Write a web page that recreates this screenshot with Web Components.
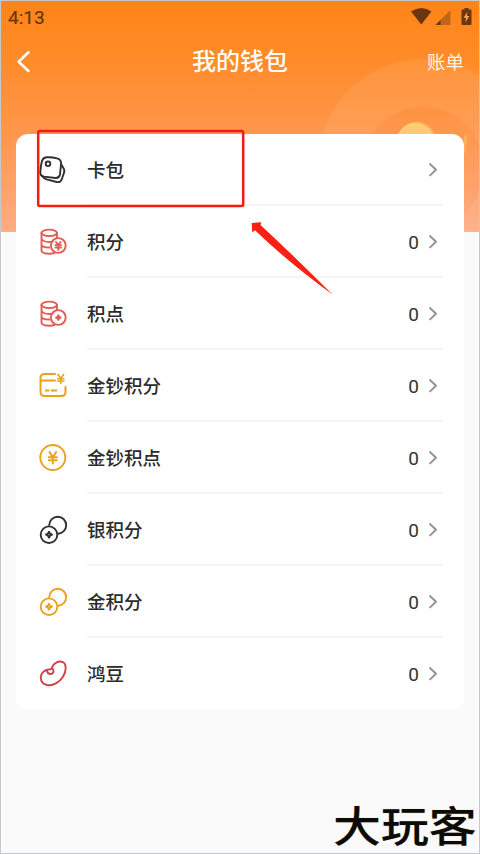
<!DOCTYPE html>
<html lang="zh-CN">
<head>
<meta charset="utf-8">
<title>我的钱包</title>
<style>
html,body{margin:0;padding:0}
body{width:480px;height:854px;overflow:hidden;font-family:Roboto,"Noto Sans CJK SC",sans-serif;color:#262626}
</style>
</head>
<body>
<wallet-app></wallet-app>
<script>
const define = (name, html) => {
  const t = document.createElement('template');
  t.innerHTML = html;
  customElements.define(name, class extends HTMLElement {
    constructor() {
      super();
      this.attachShadow({mode: 'open'}).append(t.content.cloneNode(true));
    }
  });
};

const stack = '<path d="M2 5v17.500c0 2 3.500 3.200 8 3.200q3 0 5-.8M17.500 5v5M2 10.500c0 2 3.500 3.500 8 3.500q2 0 3-.4M2 16.500c0 1.800 3.500 3 8 3"/><ellipse cx="9.750" cy="4.800" rx="7.750" ry="3.200"/><circle cx="18.800" cy="17.500" r="7.400"/>';
const coins = '<path d="M9.700 9A8.500 8.500 0 1 1 18.300 17.700"/><circle cx="9.500" cy="18.700" r="8.300"/><path stroke-width="2" d="M9.500 15.800l1 1.900 1.900 1-1.900 1-1 1.900-1-1.900-1.900-1 1.900-1z"/>';
const icons = {
  card: ['#303030', '<path d="M7 1.300Q12 .8 17.500 2.400Q21.800 3.500 21.600 7.500L20.500 18.500Q19.700 22.300 16 22L4.500 20.600Q.6 20 .8 16.200Q1 10 2.500 5Q3.500 1.700 7 1.300Z"/><path d="M21.800 8.500l2.500 4.200q.9 1.800.2 4l-2.200 6.500q-1.300 3.600-5 2.800l-10.200-2.700q-3-1-4.200-3"/><circle cx="8.500" cy="7.800" r="2.300"/>'],
  yen: ['#e45c56', stack + '<path d="M16.500 14l2.300 3 2.300-3M16 17.300h5.600M16 19.600h5.600M18.800 17v4.800"/>'],
  point: ['#e45c56', stack + '<path d="M18.800 15.300l.8 1.500 1.500.8-1.500.8-.8 1.500-.8-1.500-1.500-.8 1.500-.8z"/>'],
  bill: ['#eba11b', '<path stroke-width="2" d="M15.500 2H5Q1 2 1 6v13.500Q1 24 5 24h17Q26 24 26 20V15M1.500 8.500h14"/><path stroke-width="2" stroke-linecap="butt" d="M5.500 18.500h4.500M11.500 18.500h6"/><path stroke-width="1.600" d="M18.500 2.500l2.800 4 2.800-4M18.200 6.800h6.200M18.200 9h6.200M21.300 6.500v5"/>'],
  gold: ['#eba11b', '<circle cx="13.300" cy="13.500" r="12.500"/><path stroke-width="2" d="M10 8l3.300 5.300L16.600 8M9.300 13.300h8M9.300 16.300h8M13.300 13.300v6.300"/>'],
  silver: ['#303030', coins],
  goldcoins: ['#eba11b', coins],
  bean: ['#cf4348', '<path d="M12.500 7.500C14.500 2.500 19.500 .7 23.200 2C27.400 4 26.800 11.500 23.500 16.700C20 22.500 13.500 26 7.500 25C1.500 23.800 0 18 2 14.200C4 10.500 8 9.300 11 9.200C12 9 12.200 8.500 12.500 7.500Z"/><path d="M7.500 10.200q.2 3.600 3.100 3.800q3 0 3.400-2.700q.1-2-1.700-3.200"/>']
};
customElements.define('wallet-icon', class extends HTMLElement {
  constructor() {
    super();
    const [color, art] = icons[this.getAttribute('name')];
    this.attachShadow({mode: 'open'}).innerHTML = `<style>:host{display:block;width:28px;height:28px}svg{display:block;overflow:visible}</style>
      <svg width="28" height="28" viewBox="-0.500 0 28 28" fill="none" stroke="${color}" stroke-width="1.900" stroke-linecap="round" stroke-linejoin="round">${art}</svg>`;
  }
});

define('status-bar', `<style>
:host{display:flex;height:31px;padding:0 7px 0 7px;align-items:center;justify-content:space-between;color:#693611;font:400 19px/31px Roboto,sans-serif}
span{-webkit-text-stroke:.2px currentColor;padding-top:1px}
svg{display:block}</style>
<span>4:13</span>
<svg width="62" height="20" viewBox="0 0 62 20">
<path fill="#693611" d="M1 4.500Q11.500-2.500 21.500 4.500L11.300 17.500Z"/>
<path fill="#bf6519" d="M25.500 18L40.500 3v15z"/><path fill="#693611" d="M25.500 18l5-5v5z"/>
<path fill="#693611" d="M51.500 3.500q0-1 1-1h2V1h4v1.500h2q1 0 1 1V17q0 1-1 1h-8q-1 0-1-1z"/><path fill="#ffa653" d="M57.500 4.800l-4 6h2.600l-.8 4.700 4-6.500h-2.500z"/></svg>`);

define('nav-bar', `<style>
:host{display:grid;grid-template-columns:80px 1fr 80px;height:60px;align-items:center;color:#fffdf5}
svg{display:block;margin-left:15px}
h1{margin:0;padding-bottom:5px;text-align:center;font:500 24px/36px "Noto Sans CJK SC",sans-serif}
a{justify-self:end;margin-right:15px;padding-bottom:3px;font:400 18.500px/28px "Noto Sans CJK SC",sans-serif;color:#fff5e6}</style>
<svg width="16" height="24" viewBox="0 0 16 24" fill="none" stroke="#fff" stroke-width="2.600" stroke-linecap="round" stroke-linejoin="round"><path d="M12.500 2.300L2.600 11.800l9.900 9.200"/></svg>
<h1><slot></slot></h1><a><slot name="action"></slot></a>`);

define('header-art', `<style>:host{display:block;position:absolute;inset:0}svg{display:block}</style>
<svg width="478" height="231" viewBox="1 1 478 231">
<path fill="#fff" fill-opacity=".075" fill-rule="evenodd" d="M318.500 163.500a104.500 104.500 0 1 0 209 0a104.500 104.500 0 1 0-209 0M362 168a61 61 0 1 0 122 0a61 61 0 1 0-122 0"/>
<circle cx="416.500" cy="141" r="19" fill="#ffbb5c"/><circle cx="415" cy="142" r="18" fill="#ffc978" stroke="#ffdf87" stroke-width="1"/>
<path d="M464 135h3v9h-1v9h-2z" fill="#ffae5c"/></svg>`);

define('wallet-card', `<style>
:host{display:block;position:relative;margin:42px 15px 0;background:#fff;border-radius:12px;height:576px}</style><slot></slot>`);

define('wallet-row', `<style>
:host{display:flex;height:72px;padding:0 21px 0 23px;box-sizing:border-box}
.body{flex:1;display:flex;align-items:center;box-sizing:border-box;border-bottom:2px solid #f5f5f5}
:host(:last-child) .body{border-color:transparent}
.label{flex:1;font:500 18.500px/28px "Noto Sans CJK SC",sans-serif;color:#2b2b2b}
.value{font:400 19px/28px Roboto,sans-serif;color:#333;margin:3px 8px 0 0}
svg{display:block;margin:1px 4px 0 0}</style>
<slot name="icon"></slot>
<div class="body"><span class="label"><slot></slot></span><span class="value"><slot name="value"></slot></span>
<svg width="12" height="16" viewBox="0 0 12 16" fill="none" stroke="#929292" stroke-width="1.900" stroke-linecap="round" stroke-linejoin="round"><path d="M3 2L9 7.700l-6 5.700"/></svg></div>`);

define('annotation-layer', `<style>:host{display:block;position:absolute;left:0;top:0;pointer-events:none}svg{display:block}</style>
<svg width="480" height="310" viewBox="0 0 480 310">
<rect x="38.200" y="131" width="205" height="75" rx="1.500" fill="none" stroke="#f41c12" stroke-width="2.500"/>
<path fill="#fb2013" d="M251.700 223L261.300 222.300L260.500 225Q295 257 332.500 294.500Q289 263 255 230.200L252.300 232.500Z"/></svg>`);

define('site-mark', `<style>
:host{display:block;position:absolute;left:333px;top:796px;width:143px;font:500 42px/56px "Noto Sans CJK SC",sans-serif;color:#0c0b08;white-space:nowrap;text-shadow:0 0 1px #c9b98b}
span{display:inline-block;transform:scaleX(1.140);transform-origin:0 50%}</style><span><slot></slot></span>`);

define('wallet-app', `<style>
:host{display:block;position:relative;width:480px;height:854px;box-sizing:border-box;border:1px solid #c6c9c9;background:#fafafa;overflow:hidden}
.bg{position:absolute;left:0;top:0;width:478px;height:231px;background:linear-gradient(180deg,#ff8415 0%,#ff8c2c 28%,#ff9850 60%,#ffac84 100%)}
main{position:relative}
annotation-layer,site-mark{margin:-1px 0 0 -1px}
wallet-row wallet-icon{margin:22px 20px 0 0;flex:none}</style>
<div class="bg"><header-art></header-art></div>
<main><status-bar></status-bar>
<nav-bar>我的钱包<span slot="action">账单</span></nav-bar>
<wallet-card>
<wallet-row><wallet-icon slot="icon" name="card"></wallet-icon>卡包</wallet-row>
<wallet-row><wallet-icon slot="icon" name="yen"></wallet-icon>积分<span slot="value">0</span></wallet-row>
<wallet-row><wallet-icon slot="icon" name="point"></wallet-icon>积点<span slot="value">0</span></wallet-row>
<wallet-row><wallet-icon slot="icon" name="bill"></wallet-icon>金钞积分<span slot="value">0</span></wallet-row>
<wallet-row><wallet-icon slot="icon" name="gold"></wallet-icon>金钞积点<span slot="value">0</span></wallet-row>
<wallet-row><wallet-icon slot="icon" name="silver"></wallet-icon>银积分<span slot="value">0</span></wallet-row>
<wallet-row><wallet-icon slot="icon" name="goldcoins"></wallet-icon>金积分<span slot="value">0</span></wallet-row>
<wallet-row><wallet-icon slot="icon" name="bean"></wallet-icon>鸿豆<span slot="value">0</span></wallet-row>
</wallet-card></main>
<annotation-layer></annotation-layer>
<site-mark>大玩客</site-mark>`);
</script>
</body>
</html>
